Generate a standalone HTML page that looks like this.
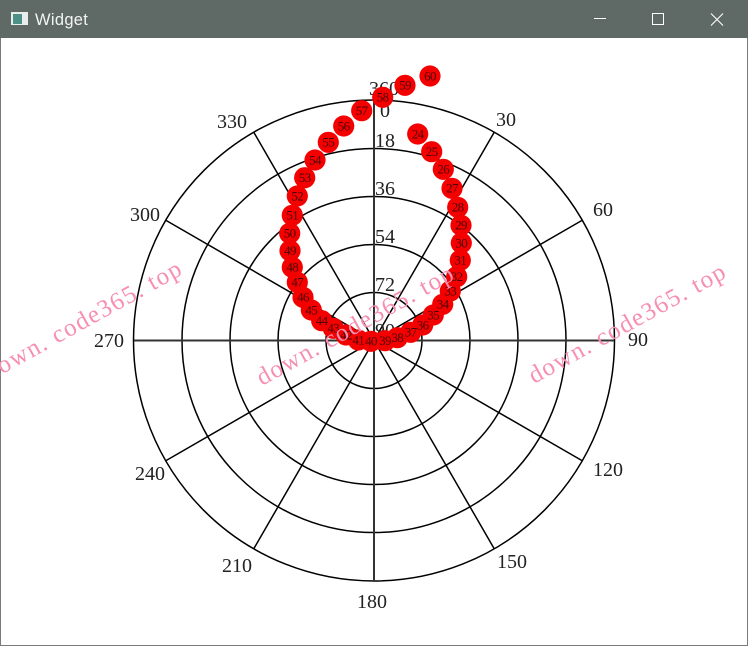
<!DOCTYPE html>
<html><head><meta charset="utf-8"><style>
html,body{margin:0;padding:0;background:#fff;width:748px;height:646px;overflow:hidden}
svg{display:block}
</style></head><body>
<svg width="748" height="646" viewBox="0 0 748 646" xmlns="http://www.w3.org/2000/svg">
<rect width="748" height="646" fill="#fff"/>
<rect x="0.5" y="0.5" width="747" height="645" fill="none" stroke="#7a7a7a"/>
<rect x="0" y="0" width="748" height="38" fill="#5f6a66"/>
<rect x="11" y="12" width="17" height="13" fill="#e8eeea"/>
<rect x="13" y="14" width="9" height="10" fill="#4d9186"/>
<text x="35" y="25" font-family="'Liberation Sans',sans-serif" font-size="16.5" fill="#f2f4f3" letter-spacing="0.3">Widget</text>
<path d="M594 18.5H606" stroke="#fff" stroke-width="1"/>
<rect x="652.5" y="13.5" width="11" height="11" fill="none" stroke="#fff" stroke-width="1"/>
<path d="M711 13.5L723 25.5M723 13.5L711 25.5" stroke="#fff" stroke-width="1.1"/>

<g fill="none" stroke="#000" stroke-width="1.5">
<circle cx="374" cy="340.5" r="48"/><circle cx="374" cy="340.5" r="96"/><circle cx="374" cy="340.5" r="144"/><circle cx="374" cy="340.5" r="192"/><circle cx="374" cy="340.5" r="240.5"/>
<path d="M494 132.6L254 548.4M581.8 220.5L166.2 460.5M581.8 460.5L166.2 220.5M494 548.4L254 132.6"/>
</g>
<path d="M374 100V581M134 340.5H614" stroke="#333" stroke-width="2" fill="none"/>

<g font-family="'Liberation Serif',serif" font-size="20" fill="#222" text-anchor="middle">
<text x="384" y="95">360</text><text x="385" y="117">0</text><text x="385" y="147">18</text><text x="385" y="195">36</text><text x="385" y="243">54</text><text x="385" y="291">72</text><text x="385" y="337">90</text>
<text x="506" y="126">30</text><text x="603" y="216">60</text><text x="638" y="346">90</text><text x="608" y="476">120</text><text x="512" y="568">150</text><text x="372" y="608">180</text><text x="237" y="572">210</text><text x="150" y="480">240</text><text x="109" y="347">270</text><text x="145" y="221">300</text><text x="232" y="128">330</text>
</g>

<g fill="#f50000">
<circle cx="430" cy="76" r="10.6"/><circle cx="405" cy="85.3" r="10.6"/><circle cx="382.7" cy="97.3" r="10.6"/><circle cx="361.7" cy="110.7" r="10.6"/><circle cx="343.7" cy="126" r="10.6"/><circle cx="328.3" cy="142.3" r="10.6"/><circle cx="315" cy="160" r="10.6"/><circle cx="304.7" cy="177.7" r="10.6"/><circle cx="297.3" cy="196" r="10.6"/><circle cx="292.3" cy="215.3" r="10.6"/><circle cx="289.7" cy="233.3" r="10.6"/><circle cx="290" cy="250.7" r="10.6"/><circle cx="292.3" cy="267.3" r="10.6"/><circle cx="297.3" cy="282.3" r="10.6"/><circle cx="303" cy="297.3" r="10.6"/><circle cx="311.3" cy="310" r="10.6"/><circle cx="321.7" cy="320.7" r="10.6"/><circle cx="333.3" cy="328.3" r="10.6"/><circle cx="346" cy="335" r="10.6"/><circle cx="358.3" cy="340" r="10.6"/><circle cx="371" cy="341.3" r="10.6"/><circle cx="385" cy="340.7" r="10.6"/><circle cx="397.3" cy="337.7" r="10.6"/><circle cx="410.7" cy="332.3" r="10.6"/><circle cx="422.7" cy="325" r="10.6"/><circle cx="433.3" cy="315" r="10.6"/><circle cx="442.7" cy="304.3" r="10.6"/><circle cx="450.3" cy="291" r="10.6"/><circle cx="456.7" cy="276.7" r="10.6"/><circle cx="460.3" cy="260.3" r="10.6"/><circle cx="461.3" cy="243" r="10.6"/><circle cx="461" cy="225.3" r="10.6"/><circle cx="457.7" cy="207.3" r="10.6"/><circle cx="452" cy="188.3" r="10.6"/><circle cx="443.3" cy="169.3" r="10.6"/><circle cx="431.7" cy="151.7" r="10.6"/><circle cx="417.7" cy="134" r="10.6"/>
</g>
<g font-family="'Liberation Serif',serif" font-size="13" fill="#4a0404" text-anchor="middle" letter-spacing="-0.6">
<text x="430" y="80.5">60</text><text x="405" y="89.5">59</text><text x="382.7" y="101.5">58</text><text x="361.7" y="115">57</text><text x="343.7" y="130.5">56</text><text x="328.3" y="146.5">55</text><text x="315" y="164.5">54</text><text x="304.7" y="182">53</text><text x="297.3" y="200.5">52</text><text x="292.3" y="219.5">51</text><text x="289.7" y="237.5">50</text><text x="290" y="255">49</text><text x="292.3" y="271.5">48</text><text x="297.3" y="286.5">47</text><text x="303" y="301.5">46</text><text x="311.3" y="314.5">45</text><text x="321.7" y="325">44</text><text x="333.3" y="332.5">43</text><text x="346" y="339.5">42</text><text x="358.3" y="344.5">41</text><text x="371" y="345.5">40</text><text x="385" y="345">39</text><text x="397.3" y="342">38</text><text x="410.7" y="336.5">37</text><text x="422.7" y="329.5">36</text><text x="433.3" y="319.5">35</text><text x="442.7" y="308.5">34</text><text x="450.3" y="295.5">33</text><text x="456.7" y="281">32</text><text x="460.3" y="264.5">31</text><text x="461.3" y="247.5">30</text><text x="461" y="229.5">29</text><text x="457.7" y="211.5">28</text><text x="452" y="192.5">27</text><text x="443.3" y="173.5">26</text><text x="431.7" y="156">25</text><text x="417.7" y="138.5">24</text>
</g>

<g font-family="'Liberation Serif',serif" font-size="25" fill="#f78fb0" letter-spacing="1.4">
<text transform="translate(-10 381) rotate(-29)">down. code365. top</text>
<text transform="translate(262 386) rotate(-29)">down. code365. top</text>
<text transform="translate(534 384) rotate(-29)">down. code365. top</text>
</g>
</svg>
</body></html>
